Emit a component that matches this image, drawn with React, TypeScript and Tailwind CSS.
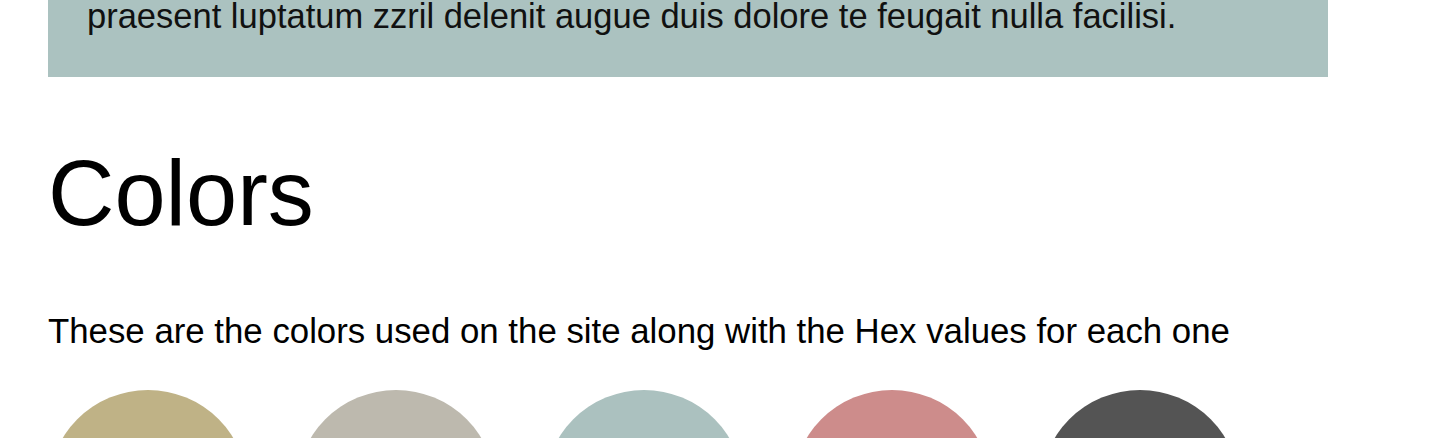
const swatches = [
  { name: "Sand", hex: "#bfb286" },
  { name: "Stone", hex: "#bdb9ae" },
  { name: "Sage", hex: "#abc1bf" },
  { name: "Rose", hex: "#cd8c8b" },
  { name: "Charcoal", hex: "#545454" },
];

export default function App() {
  return (
    <main className="min-h-screen bg-white text-black font-['Liberation_Sans',Helvetica,Arial,sans-serif] overflow-hidden">
      {/* Intro box (tail end) */}
      <section className="ml-[48px] w-[1280px] bg-[#abc2c0] pl-[39px] pr-[40px] pb-[45px]">
        <p className="text-[34.5px] leading-[32px] text-[#111]">
          praesent luptatum zzril delenit augue duis dolore te feugait nulla facilisi.
        </p>
      </section>

      {/* Colors */}
      <section className="ml-[48px]">
        <h1 className="mt-[70px] text-[92px] leading-[92px] font-normal">Colors</h1>
        <p className="mt-[75px] text-[34.8px] leading-[34px]">
          These are the colors used on the site along with the Hex values for each one
        </p>
        <div className="mt-[42px] flex gap-[48px]">
          {swatches.map((s) => (
            <div key={s.name} className="flex flex-col items-center">
              {/* swatch colour comes from data */}
              <div
                className="w-[200px] h-[200px] rounded-full"
                style={{ backgroundColor: s.hex }}
              />
            </div>
          ))}
        </div>
      </section>
    </main>
  );
}
